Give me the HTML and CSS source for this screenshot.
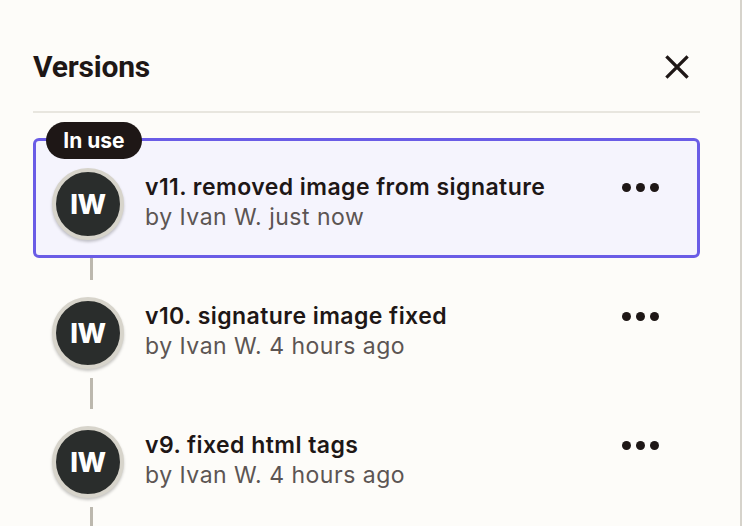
FILE: index.html
```html
<!DOCTYPE html>
<html lang="en">
<head>
<meta charset="utf-8">
<title>Versions</title>
<link rel="stylesheet" href="styles.css">
</head>
<body>
<aside class="panel">
  <header class="panel-header">
    <h1 class="panel-title">Versions</h1>
    <button class="close-btn" aria-label="Close">
      <svg width="24" height="24" viewBox="0 0 24 24"><path d="M2.5 2.5 L21.5 21.5 M21.5 2.5 L2.5 21.5" stroke="#1e1716" stroke-width="3.2" stroke-linecap="square" fill="none"/></svg>
    </button>
  </header>
  <ul class="versions">
    <li class="version is-active">
      <span class="badge">In use</span>
      <div class="avatar">IW</div>
      <div class="version-text">
        <div class="version-title">v11. removed image from signature</div>
        <div class="version-meta">by Ivan W. just now</div>
      </div>
      <button class="more-btn" aria-label="More"><svg width="37" height="9" viewBox="0 0 37 9"><circle cx="4.5" cy="4.5" r="4.5"/><circle cx="18.5" cy="4.5" r="4.5"/><circle cx="32.5" cy="4.5" r="4.5"/></svg></button>
    </li>
    <li class="version">
      <div class="avatar">IW</div>
      <div class="version-text">
        <div class="version-title">v10. signature image fixed</div>
        <div class="version-meta">by Ivan W. 4 hours ago</div>
      </div>
      <button class="more-btn" aria-label="More"><svg width="37" height="9" viewBox="0 0 37 9"><circle cx="4.5" cy="4.5" r="4.5"/><circle cx="18.5" cy="4.5" r="4.5"/><circle cx="32.5" cy="4.5" r="4.5"/></svg></button>
    </li>
    <li class="version">
      <div class="avatar">IW</div>
      <div class="version-text">
        <div class="version-title">v9. fixed html tags</div>
        <div class="version-meta">by Ivan W. 4 hours ago</div>
      </div>
      <button class="more-btn" aria-label="More"><svg width="37" height="9" viewBox="0 0 37 9"><circle cx="4.5" cy="4.5" r="4.5"/><circle cx="18.5" cy="4.5" r="4.5"/><circle cx="32.5" cy="4.5" r="4.5"/></svg></button>
    </li>
  </ul>
</aside>
</body>
</html>
```
FILE: styles.css
```css
html {
  background: #fdfcf9;
}
html, body {
  margin: 0;
  padding: 0;
}
body {
  font-family: Inter, "Noto Sans", sans-serif;
  color: #1e1716;
  overflow: hidden;
}
.panel {
  width: 742px;
  height: 526px;
  border-right: 2px solid #d6d3cb;
  padding: 0 40px 0 33px;
  box-sizing: border-box;
  overflow: hidden;
}
.panel-header {
  display: flex;
  align-items: center;
  justify-content: space-between;
  height: 44px;
  padding: 44px 0 23px;
  border-bottom: 2px solid #e8e6df;
}
.panel-title {
  margin: 0;
  font-family: Roboto, Inter, sans-serif;
  font-weight: 700;
  font-size: 30px;
  letter-spacing: -0.2px;
  color: #1e1716;
}
.close-btn {
  border: 0;
  background: none;
  padding: 0;
  margin: 2px 11px 0 0;
  display: flex;
}
.versions {
  list-style: none;
  margin: 25px 0 0;
  padding: 0;
  display: flex;
  flex-direction: column;
  gap: 9px;
}
.version {
  position: relative;
  display: flex;
  align-items: flex-start;
  border: 3px solid transparent;
  border-radius: 6px;
  padding: 27px 16px 15px 16px;
}
.version::after {
  content: "";
  position: absolute;
  left: 54px;
  top: 108px;
  width: 3px;
  height: 31px;
  background: #bcb8ae;
  z-index: -1;
}
.version.is-active {
  border-color: #6a5ce6;
  background: #f5f4fd;
}
.badge {
  position: absolute;
  left: 10px;
  top: -19px;
  height: 37px;
  width: 96px;
  border-radius: 19px;
  background: #1e1716;
  color: #fff;
  font-weight: 700;
  font-size: 21px;
  display: flex;
  align-items: center;
  justify-content: center;
}
.avatar {
  flex: none;
  width: 72px;
  height: 72px;
  box-sizing: border-box;
  border-radius: 50%;
  border: 4px solid #d7d4cb;
  background: #2a2d2c;
  color: #fff;
  font-weight: 800;
  font-size: 27px;
  letter-spacing: -0.5px;
  display: flex;
  align-items: center;
  justify-content: center;
  box-shadow: 0 2px 3px rgba(0, 0, 0, 0.22);
}
.version-text {
  flex: 1;
  margin: 4px 0 0 21px;
}
.version-title {
  font-weight: 600;
  font-size: 23px;
  letter-spacing: 0.45px;
  line-height: 30px;
  color: #1e1716;
}
.version-meta {
  font-weight: 400;
  font-size: 23px;
  letter-spacing: 0.5px;
  line-height: 30px;
  color: #5c5553;
}
.more-btn {
  flex: none;
  border: 0;
  background: none;
  padding: 0;
  margin: 15px 22px 0 0;
  display: flex;
  fill: #1e1716;
}
```
